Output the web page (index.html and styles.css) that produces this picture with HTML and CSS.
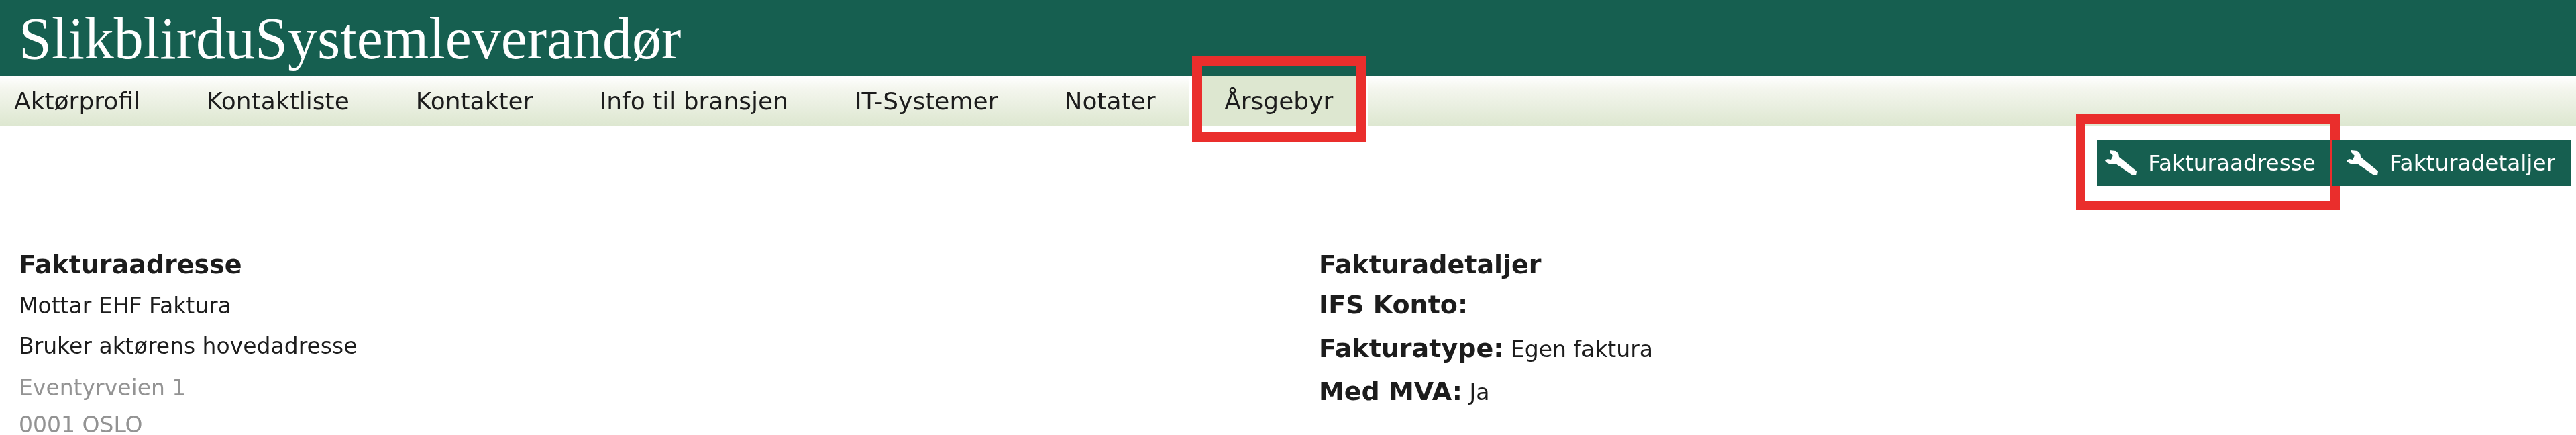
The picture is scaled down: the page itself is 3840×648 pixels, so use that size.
FILE: index.html
```html
<!DOCTYPE html>
<html>
<head>
    <meta charset="UTF-8">
    <title>SlikblirduSystemleverandør</title>
    <link rel="stylesheet" href="styles.css">
</head>
<body>
    <header class="site-header">
        <h1>SlikblirduSystemleverandør</h1>
    </header>

    <nav class="tabs">
        <a class="tab">Aktørprofil</a>
        <a class="tab">Kontaktliste</a>
        <a class="tab">Kontakter</a>
        <a class="tab">Info til bransjen</a>
        <a class="tab">IT-Systemer</a>
        <a class="tab">Notater</a>
        <a class="tab active">Årsgebyr<span class="marker marker-tab"></span></a>
    </nav>

    <div class="toolbar">
        <a class="tool-btn">
            <svg class="wrench" viewBox="0 0 49 39"><path d="M8 1 L17 2 Q22 5 22 11 L48 32 L47 38 L42 38 L17 21 Q11 23 7 21 Q2 19 1 16 L5 14 L10 15 L13 9 L8 4 Z"/></svg>
            <span>Fakturaadresse</span>
            <span class="marker marker-btn"></span>
        </a>
        <a class="tool-btn">
            <svg class="wrench" viewBox="0 0 49 39"><path d="M8 1 L17 2 Q22 5 22 11 L48 32 L47 38 L42 38 L17 21 Q11 23 7 21 Q2 19 1 16 L5 14 L10 15 L13 9 L8 4 Z"/></svg>
            <span>Fakturadetaljer</span>
        </a>
    </div>

    <main class="columns">
        <section>
            <h2>Fakturaadresse</h2>
            <p>Mottar EHF Faktura</p>
            <p>Bruker aktørens hovedadresse</p>
            <div class="address">
                <p>Eventyrveien 1</p>
                <p>0001 OSLO</p>
            </div>
        </section>
        <section>
            <h2>Fakturadetaljer</h2>
            <p class="field"><b>IFS Konto:</b></p>
            <p class="field"><b>Fakturatype:</b> Egen faktura</p>
            <p class="field"><b>Med MVA:</b> Ja</p>
        </section>
    </main>
</body>
</html>
```
FILE: styles.css
```css
:root {
    --green: #165f50;
    --tab-end: #dde7d0;
    --marker: #ea2e2c;
}
html, body {
    height: 648px;
    overflow: hidden;
}
body {
    margin: 0;
    background-color: #ffffff;
    color: #1c1c1c;
    font-family: "DejaVu Sans", Verdana, sans-serif;
    font-size: 33px;
    filter: blur(0.7px);
}
.site-header {
    height: 113px;
    background-color: var(--green);
    padding-left: 28px;
    box-sizing: border-box;
}
h1 {
    margin: 0;
    padding-top: 14px;
    color: #ffffff;
    font-family: "Liberation Serif", serif;
    font-size: 88px;
    line-height: 88px;
    font-weight: normal;
}
.tabs {
    height: 75px;
    display: flex;
    background: linear-gradient(#ffffff, #f4f6ee 25%, var(--tab-end) 100%);
}
.tab {
    position: relative;
    padding: 0 49.5px;
    font-size: 36px;
    line-height: 75px;
}
.tab:first-child {
    padding-left: 21px;
}
.tab.active {
    background: var(--tab-end);
    background-clip: padding-box;
    border-left: 5px solid #ffffff;
    border-right: 3px solid #ffffff;
    padding: 0 50px 0 48px;
}
.marker {
    position: absolute;
    border: 14px solid var(--marker);
    box-sizing: border-box;
}
.marker-tab {
    left: 0;
    right: 0;
    top: -29px;
    bottom: -23px;
    border-width: 14px 15px;
}
.marker-btn {
    left: -32px;
    right: -12px;
    top: -38px;
    bottom: -36px;
}
.toolbar {
    display: flex;
    justify-content: flex-end;
    padding: 20px 7px 0 0;
}
.tool-btn {
    position: relative;
    display: flex;
    align-items: center;
    gap: 16px;
    height: 69px;
    padding: 0 24px 0 21px;
    background-color: var(--green);
    color: #ffffff;
    font-size: 32.7px;
}
.tool-btn:first-child {
    padding-left: 11px;
}
.wrench {
    width: 49px;
    height: 39px;
    fill: #ffffff;
}
.columns {
    display: grid;
    grid-template-columns: 1966px 1fr;
    padding-top: 97px;
}
.columns section {
    padding-left: 28px;
}
.columns section + section {
    padding-left: 0;
}
h2 {
    margin: 0 0 12px;
    font-size: 38px;
    line-height: 40px;
}
.columns section + section h2 {
    margin-bottom: 9px;
}
p {
    margin: 0;
    line-height: 60px;
}
.address {
    margin-top: 4px;
    color: #939393;
}
.address p {
    line-height: 55px;
}
.field {
    line-height: 62.5px;
}
.field b {
    font-size: 38px;
}
```
